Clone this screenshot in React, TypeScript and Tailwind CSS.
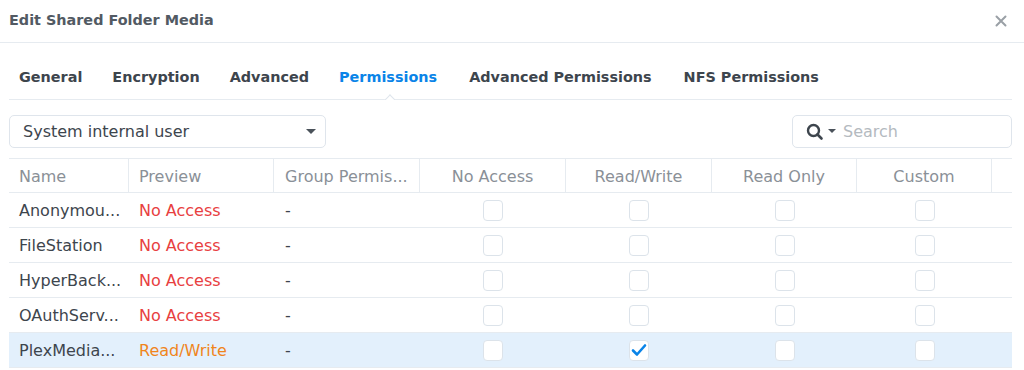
import React from 'react';

const tabs = ['General', 'Encryption', 'Advanced', 'Permissions', 'Advanced Permissions', 'NFS Permissions'];

const rows = [
  { name: 'Anonymou...', preview: 'No Access', checked: -1 },
  { name: 'FileStation', preview: 'No Access', checked: -1 },
  { name: 'HyperBack...', preview: 'No Access', checked: -1 },
  { name: 'OAuthServ...', preview: 'No Access', checked: -1 },
  { name: 'PlexMedia...', preview: 'Read/Write', checked: 1, selected: true },
];

function Checkbox({ checked }: { checked: boolean }) {
  return (
    <div className="w-[20px] h-[21px] rounded-[4px] border border-[#dce3ea] bg-white flex items-center justify-center">
      {checked && (
        <svg width="16" height="14" viewBox="0 0 16 14">
          <path d="M2 7.5l4 4 8-9" fill="none" stroke="#0a84e8" strokeWidth="2.6" strokeLinecap="round" strokeLinejoin="round" />
        </svg>
      )}
    </div>
  );
}

export default function App() {
  return (
    <div className="w-[1024px] h-[370px] bg-white text-[#414b55] overflow-hidden" style={{ fontFamily: '"DejaVu Sans", Verdana, sans-serif' }}>
      {/* Title bar */}
      <div className="h-[43px] flex items-center justify-between pl-[9px] pr-[17px] border-b border-[#e6ebf0]">
        <span className="text-[14.4px] font-bold text-[#525a63]">Edit Shared Folder Media</span>
        <svg width="12" height="12" viewBox="0 0 12 12">
          <path d="M1.5 1.5l9 9M10.5 1.5l-9 9" stroke="#9aa0a6" strokeWidth="2" strokeLinecap="round" />
        </svg>
      </div>

      <div className="px-[9px] mr-[3px]">
        {/* Tabs */}
        <div className="relative h-[57px] flex items-center gap-[30px] pl-[10px] border-b border-[#e6ebf0] pt-[14px]">
          {tabs.map((t, i) => (
            <span key={t} className={`text-[14.4px] font-bold ${i > 3 ? 'ml-[2px]' : ''} ${t === 'Permissions' ? 'text-[#0a84e8]' : 'text-[#3d454d]'}`}>
              {t}
            </span>
          ))}
          <div className="absolute left-[375px] bottom-[-1px] w-[11px] h-[6px] overflow-hidden">
            <div className="w-[8px] h-[8px] bg-white border-l border-t border-[#dfe5ec] rotate-45 ml-[1.5px] mt-[2px]" />
          </div>
        </div>

        {/* Toolbar */}
        <div className="flex items-center justify-between mt-[15px] h-[33px]">
          <div className="w-[317px] h-[33px] rounded-[5px] border border-[#dfe5ec] flex items-center justify-between pl-[13px] pr-[8px]">
            <span className="text-[16px] text-[#3d454d]">System internal user</span>
            <svg width="10" height="6" viewBox="0 0 10 6" className="mr-[1px]">
              <path d="M0 0h10L5 5z" fill="#4a525a" />
            </svg>
          </div>
          <div className="w-[220px] h-[33px] rounded-[5px] border border-[#dfe5ec] flex items-center pl-[13px] gap-[4px]">
            <svg width="18" height="18" viewBox="0 0 18 18">
              <circle cx="7.5" cy="7.5" r="5.5" fill="none" stroke="#3d454d" strokeWidth="2.4" />
              <path d="M11.5 11.5l4 4" stroke="#3d454d" strokeWidth="2.6" strokeLinecap="round" />
            </svg>
            <svg width="8" height="5" viewBox="0 0 8 5">
              <path d="M0 0h8L4 4z" fill="#4a525a" />
            </svg>
            <span className="text-[16px] text-[#b4bac0] ml-[3px]">Search</span>
          </div>
        </div>

        {/* Table */}
        <div className="mt-[10px] w-[1003px] text-[16px]">
          <div className="flex h-[35px] border-t border-b border-[#e6ebf0] text-[#8a9097]">
            <div className="w-[120px] pl-[10px] pt-[3px] flex items-center border-r border-[#e6ebf0]">Name</div>
            <div className="w-[145px] pl-[10px] pt-[3px] flex items-center border-r border-[#e6ebf0]">Preview</div>
            <div className="w-[146px] pl-[11px] pt-[3px] flex items-center border-r border-[#e6ebf0] whitespace-nowrap overflow-hidden">Group Permis...</div>
            <div className="w-[146px] pt-[3px] flex items-center justify-center border-r border-[#e6ebf0]">No Access</div>
            <div className="w-[146px] pt-[3px] flex items-center justify-center border-r border-[#e6ebf0]">Read/Write</div>
            <div className="w-[145px] pt-[3px] flex items-center justify-center border-r border-[#e6ebf0]">Read Only</div>
            <div className="w-[135px] pt-[3px] flex items-center justify-center border-r border-[#e6ebf0]">Custom</div>
            <div className="flex-1" />
          </div>
          {rows.map((r) => (
            <div key={r.name} className={`flex h-[35px] border-b border-[#e6ebf0] ${r.selected ? 'bg-[#e3f0fc]' : ''}`}>
              <div className="w-[120px] pl-[10px] pt-[2px] flex items-center text-[#3d454d] whitespace-nowrap overflow-hidden">{r.name}</div>
              <div className={`w-[145px] pl-[10px] pt-[2px] flex items-center ${r.preview === 'No Access' ? 'text-[#e8403f]' : 'text-[#f0851c]'}`}>{r.preview}</div>
              <div className="w-[146px] pl-[11px] pt-[2px] flex items-center text-[#3d454d]">-</div>
              {[0, 1, 2, 3].map((i) => (
                <div key={i} className={`${i === 2 ? 'w-[145px]' : i === 3 ? 'w-[135px]' : 'w-[146px]'} flex items-center justify-center`}>
                  <Checkbox checked={r.checked === i} />
                </div>
              ))}
              <div className="flex-1" />
            </div>
          ))}
        </div>
      </div>
    </div>
  );
}
